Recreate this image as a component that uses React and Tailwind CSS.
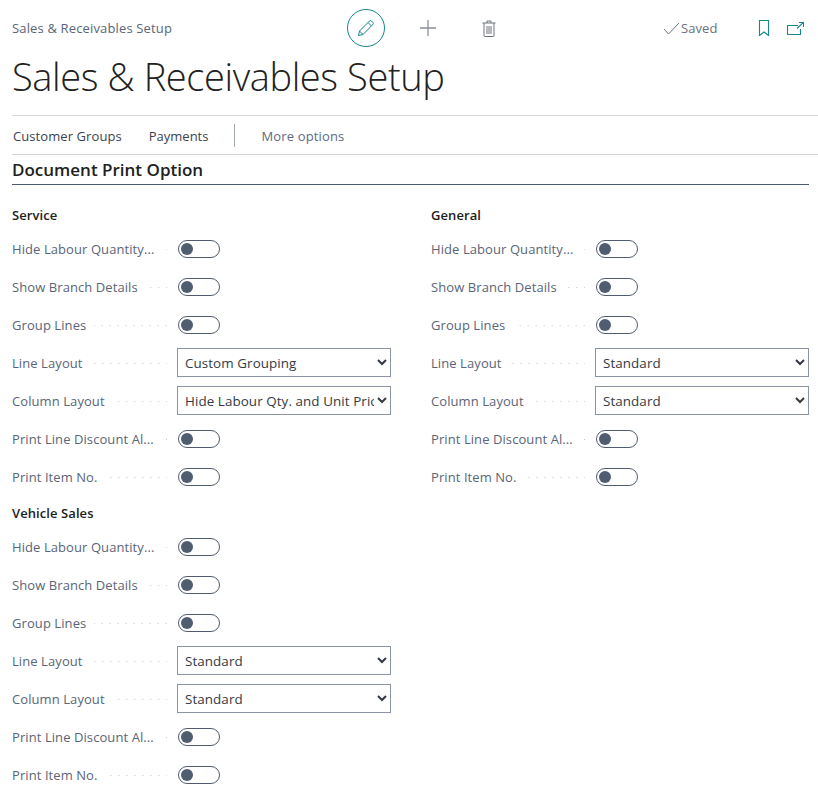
function Toggle() {
  return (
    <span className="ml-[1px] flex h-[18px] w-[42px] items-center rounded-full border border-[#505c6f] bg-white pl-[2px]">
      <span className="h-[12px] w-[12px] rounded-full bg-[#505c6f]" />
    </span>
  );
}
function Label({ text, inset }) {
  return (
    <div className={inset ? "flex w-[165px] shrink-0 items-center pl-[1px] pr-[10px] pt-[1px]" : "flex w-[165px] shrink-0 items-center pr-[10px] pt-[1px]"}>
      <span className="shrink-0 whitespace-nowrap text-[#5a6577]">{text}</span>
      <span className="ml-[8px] h-[1px] flex-1 bg-[linear-gradient(to_left,#c2c6cc_1px,transparent_1px)] bg-[length:8px_1px] bg-right" />
    </div>
  );
}
function BoolRow({ label, inset }) {
  return (
    <div className="flex h-[38px] items-center">
      <Label text={label} inset={inset} />
      <Toggle />
    </div>
  );
}
function SelectRow({ label, value, inset }) {
  return (
    <div className="flex h-[38px] items-center">
      <Label text={label} inset={inset} />
      <select defaultValue={value} className="mb-[1px] h-[29px] w-[214px] appearance-auto rounded-none border border-[#8a94a2] bg-white pl-[3px] pr-0 text-[13.400px] text-[#333a45]">
        <option>{value}</option>
      </select>
    </div>
  );
}
function Group({ title, line, column, inset }) {
  return (
    <div>
      <div className={inset ? "flex h-[22px] items-center pl-[1px] font-semibold text-[#212121]" : "flex h-[22px] items-center font-semibold text-[#212121]"}>{title}</div>
      <div className="mt-[3px]">
        <BoolRow inset={inset} label="Hide Labour Quantity..." />
        <BoolRow inset={inset} label="Show Branch Details" />
        <BoolRow inset={inset} label="Group Lines" />
        <SelectRow inset={inset} label="Line Layout" value={line} />
        <SelectRow inset={inset} label="Column Layout" value={column} />
        <BoolRow inset={inset} label="Print Line Discount Al..." />
        <BoolRow inset={inset} label="Print Item No." />
      </div>
    </div>
  );
}
export default function App() {
  return (
    <div className="h-[812px] w-[818px] overflow-hidden bg-white pl-[12px] font-['Open_Sans',sans-serif] text-[13px] tracking-[0.08px]">
      <div className="flex h-[56px] items-center">
        <span className="w-[335px] pt-[1px] tracking-[0.15px] text-[#5a6577]">Sales &amp; Receivables Setup</span>
        <span className="flex h-[38px] w-[38px] items-center justify-center rounded-full border border-[#14878c]">
          <svg width="18" height="18" viewBox="0 0 18 18" fill="none" stroke="#14878c" strokeWidth="1">
            <path d="M1.500 16.500l1-4.500L12.500 2a1.500 1.500 0 0 1 2 0l1.400 1.400a1.500 1.500 0 0 1 0 2L6 15.500z" />
            <path d="M11 3.500L14.500 7M2.500 12L6 15.500" />
          </svg>
        </span>
        <span className="ml-[34px] flex h-[18px] w-[18px] items-center justify-center">
          <svg width="18" height="18" viewBox="0 0 18 18" fill="none" stroke="#8a8f99" strokeWidth="1.3"><path d="M9 1v16M1 9h16" /></svg>
        </span>
        <span className="ml-[44px] flex h-[18px] w-[16px] items-center justify-center">
          <svg width="14" height="17" viewBox="0 0 14 17" fill="none" stroke="#6d727c" strokeWidth="1">
            <path d="M.5 3h13M5 3V1h4v2M2 3v12.500a1 1 0 0 0 1 1h8a1 1 0 0 0 1-1V3M5 6v8M7 6v8M9 6v8" />
          </svg>
        </span>
        <span className="ml-[166px] flex items-center text-[13px] text-[#6a7180]">
          <svg width="17" height="13" viewBox="0 0 17 13" fill="none" stroke="#6a7180" strokeWidth="1"><path d="M1 7l4.500 5L16 1" /></svg>
          <span className="ml-[1px] pt-[1px]">Saved</span>
        </span>
        <span className="ml-[40px] flex">
          <svg width="12" height="16" viewBox="0 0 12 16" fill="none" stroke="#14878c" strokeWidth="1.1"><path d="M1.500.5h9v15L6 12l-4.500 3.500z" /></svg>
        </span>
        <span className="ml-[17px] flex">
          <svg width="17" height="13" viewBox="0 0 17 13" fill="none" stroke="#14878c" strokeWidth="1.1"><path d="M11 3.500H.5v9h13V7M10 6.500L16 .8M12 .5h4.500V5" /></svg>
        </span>
      </div>
      <h1 className="-mt-[2px] h-[61px] text-[38px] font-light leading-[44px] tracking-[-0.4px] text-[#212121]">Sales &amp; Receivables Setup</h1>
      <div className="flex h-[40px] items-center border-y border-[#d4d6da] tracking-[0.08px]">
        <span className="ml-[1px] pt-[3px] text-[#3a4350]">Customer Groups</span>
        <span className="ml-[27px] pt-[3px] tracking-normal text-[#3a4350]">Payments</span>
        <span className="ml-[26px] h-[23px] w-[1px] bg-[#a3a9b3]" />
        <span className="ml-[26px] pt-[3px] tracking-[0.15px] text-[#5d6a80]">More options</span>
      </div>
      <div className="flex h-[30px] w-[797px] items-center border-b border-[#4c5a6e] pt-[1px] text-[17px] font-semibold tracking-normal text-[#212121]">Document Print Option</div>
      <div className="mt-[20px] flex w-[797px] gap-[39px]">
        <div className="w-[379px]">
          <Group title="Service" line="Custom Grouping" column="Hide Labour Qty. and Unit Price" />
          <div className="mt-[7px]">
            <Group title="Vehicle Sales" line="Standard" column="Standard" />
          </div>
        </div>
        <div className="w-[379px]">
          <Group inset title="General" line="Standard" column="Standard" />
        </div>
      </div>
    </div>
  );
}
